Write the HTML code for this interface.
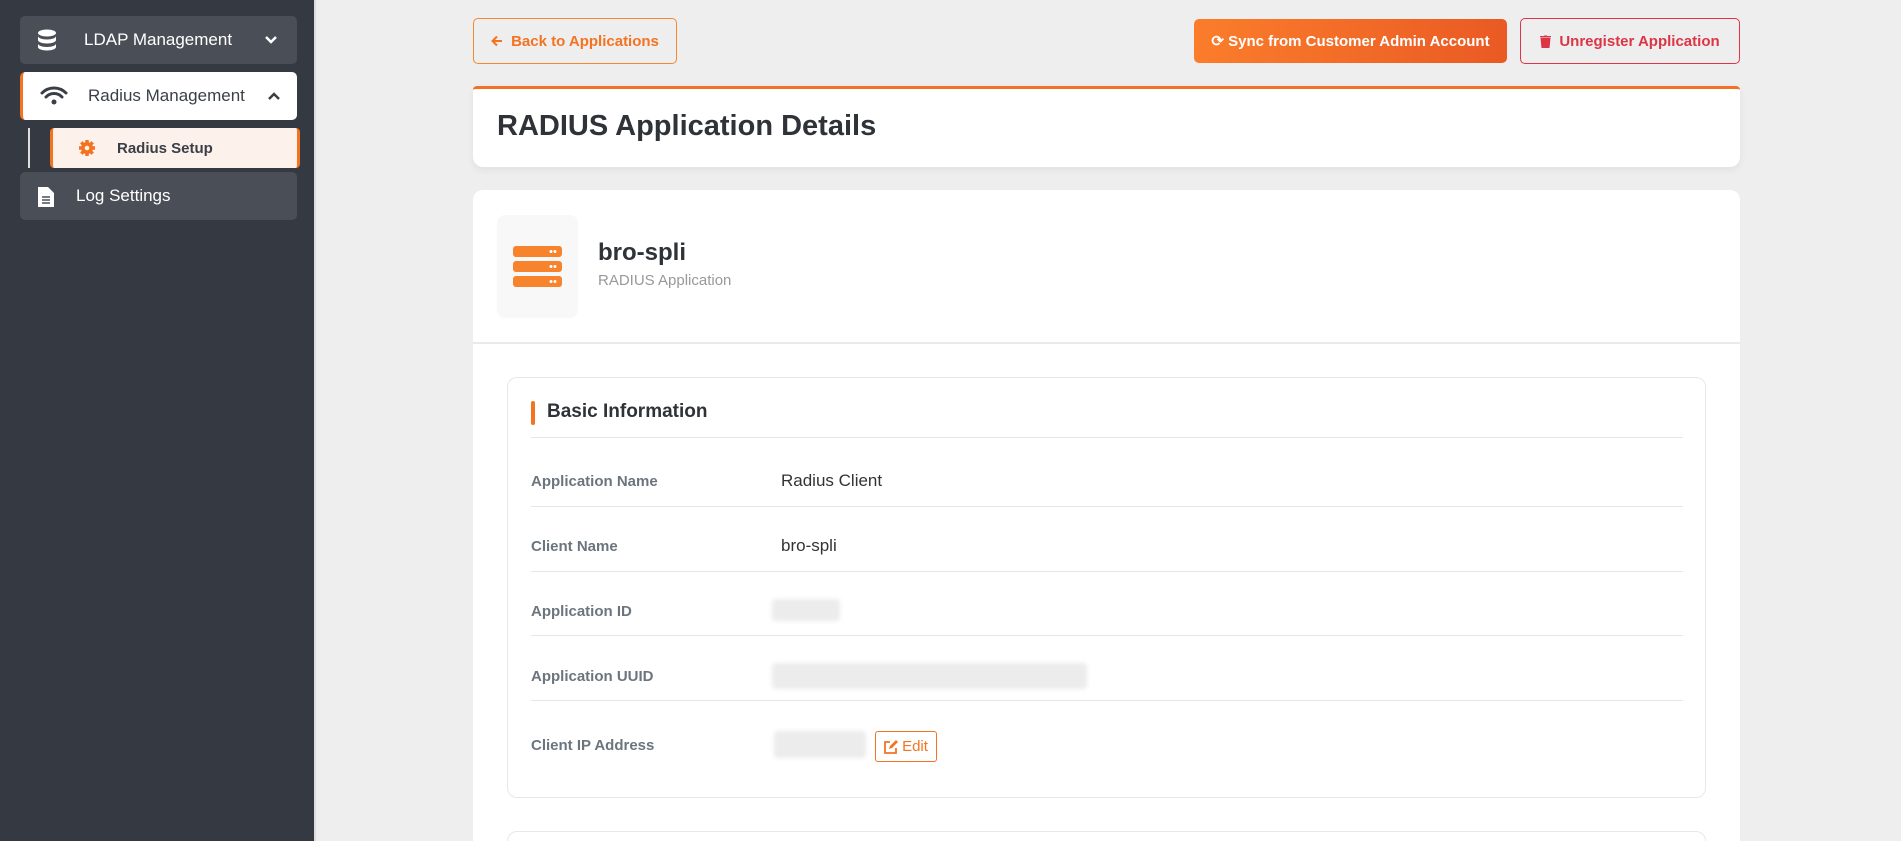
<!DOCTYPE html>
<html style="height:841px;overflow:hidden"><head><meta charset="utf-8"><style>
*{box-sizing:border-box;margin:0;padding:0}
body{width:1901px;height:841px;overflow:hidden;background:#eeeeee;font-family:"Liberation Sans",sans-serif;position:relative}
.sb{position:absolute;left:0;top:0;width:316px;height:841px;background:#353a42;border-right:2px solid #dcdcdc}
.it{position:absolute;left:20px;width:277px;height:48px;border-radius:5px;background:#4a4f57;color:#fff;font-size:17px;display:flex;align-items:center}
.abs{position:absolute}
.btn{position:absolute;top:18px;height:46px;border-radius:5px;font-size:15px;font-weight:bold;display:flex;align-items:center;justify-content:center;gap:8px}
.card{position:absolute;left:473px;width:1267px;background:#fff;border-radius:10px}
.lbl{position:absolute;left:531px;font-size:15px;font-weight:bold;color:#6c757d}
.val{position:absolute;left:781px;font-size:17px;color:#333}
.hr{position:absolute;left:531px;width:1152px;height:1px;background:#e6e6e6}
.blur{position:absolute;background:#ececec;filter:blur(2px);border-radius:3px}
</style></head><body>
<div class="sb">
 <div class="it" style="top:16px"><svg class="abs" style="left:17px" width="20" height="22" viewBox="0 0 20 22"><ellipse cx="10" cy="4" rx="9" ry="3.5" fill="#fff"/><path d="M1 7c0 2 4 3.5 9 3.5s9-1.5 9-3.5v4c0 2-4 3.5-9 3.5S1 13 1 11z" fill="#fff"/><path d="M1 14.5c0 2 4 3.5 9 3.5s9-1.5 9-3.5v3.5c0 2-4 3.5-9 3.5S1 20 1 18z" fill="#fff"/></svg><span style="position:absolute;left:64px">LDAP Management</span><svg class="abs" style="left:244px" width="14" height="10" viewBox="0 0 14 10"><path d="M2 2l5 5 5-5" stroke="#fff" stroke-width="2.5" fill="none"/></svg></div>
 <div class="it" style="top:72px;background:#fff;color:#3a3f47;border-left:3px solid #f47321"><svg class="abs" style="left:17px" width="28" height="20" viewBox="0 0 28 20"><path d="M2 7a17 17 0 0 1 24 0M6 11a11 11 0 0 1 16 0" stroke="#3a3f47" stroke-width="3" fill="none" stroke-linecap="round"/><circle cx="14" cy="16" r="2.5" fill="#3a3f47"/></svg><span style="position:absolute;left:65px">Radius Management</span><svg class="abs" style="left:244px" width="14" height="10" viewBox="0 0 14 10"><path d="M2 8l5-5 5 5" stroke="#3a3f47" stroke-width="2.5" fill="none"/></svg></div>
 <div class="abs" style="left:28px;top:128px;width:2px;height:40px;background:#ddd"></div>
 <div class="abs" style="left:50px;top:128px;width:250px;height:40px;background:#fdf1ec;border-left:3px solid #f47321;border-right:3px solid #f47321;border-radius:4px;font-size:15px;font-weight:bold;color:#3a3f47"><svg class="abs" style="left:25px;top:11px" width="18" height="18" viewBox="0 0 18 18"><circle cx="9" cy="9" r="6" fill="#f47321"/><g stroke="#f47321" stroke-width="3.5"><path d="M9 1v16M1 9h16M3.3 3.3l11.4 11.4M14.7 3.3L3.3 14.7"/></g><circle cx="9" cy="9" r="2.3" fill="#fdf1ec"/></svg><span style="position:absolute;left:64px;top:12px">Radius Setup</span></div>
 <div class="it" style="top:172px"><svg class="abs" style="left:18px" width="16" height="21" viewBox="0 0 16 21"><path d="M0 1h10l6 6v14H0z" fill="#fff"/><path d="M4 11h8M4 14h8M4 17h8" stroke="#4a4f57" stroke-width="1.5"/></svg><span style="position:absolute;left:56px">Log Settings</span></div>
</div>

<div class="btn" style="left:473px;width:204px;border:1px solid #f7882f;color:#f47321;background:transparent"><svg width="12" height="12" viewBox="0 0 12 12"><path d="M11 6H2M6 1.5L1.5 6 6 10.5" stroke="#f47321" stroke-width="2" fill="none"/></svg>Back to Applications</div>
<div class="btn" style="left:1194px;width:313px;background:linear-gradient(90deg,#fb7d2b,#ea5a24);color:#fff;top:19px;height:44px">⟳ Sync from Customer Admin Account</div>
<div class="btn" style="left:1520px;width:220px;border:1px solid #e0334a;color:#dc3545;background:transparent"><svg width="11" height="13" viewBox="0 0 11 13"><path d="M0 1.5h11M4 0h3M1 3h9l-1 10H2z" fill="#dc3545" stroke="#dc3545"/></svg>Unregister Application</div>

<div class="card" style="top:86px;height:81px;border-top:3px solid #f27027;border-radius:4px 4px 10px 10px;box-shadow:0 3px 8px rgba(0,0,0,.06)"><div class="abs" style="left:24px;top:21px;font-size:29px;font-weight:bold;color:#2f3338">RADIUS Application Details</div></div>

<div class="card" style="top:190px;height:651px;border-radius:10px 10px 0 0">
 <div class="abs" style="left:24px;top:25px;width:81px;height:103px;background:#f8f8f8;border-radius:8px"><svg class="abs" style="left:16px;top:31px" width="49" height="42" viewBox="0 0 49 42"><g fill="#f7832d"><rect y="0" width="49" height="11" rx="3"/><rect y="15" width="49" height="11" rx="3"/><rect y="30" width="49" height="11" rx="3"/></g><g fill="#fff"><circle cx="38" cy="5.5" r="1.5"/><circle cx="42" cy="5.5" r="1.5"/><circle cx="38" cy="20.5" r="1.5"/><circle cx="42" cy="20.5" r="1.5"/><circle cx="38" cy="35.5" r="1.5"/><circle cx="42" cy="35.5" r="1.5"/></g></svg></div>
 <div class="abs" style="left:125px;top:49px;font-size:24px;font-weight:bold;color:#2f3338">bro-spli</div>
 <div class="abs" style="left:125px;top:82px;font-size:15px;color:#999">RADIUS Application</div>
 <div class="abs" style="left:0;top:152px;width:1267px;height:2px;background:#e8ebee"></div>
</div>
<div class="abs" style="left:507px;top:377px;width:1199px;height:421px;border:1px solid #e8e8e8;border-radius:10px;background:#fff"></div>
<div class="abs" style="left:531px;top:401px;width:4px;height:24px;background:#f47321;border-radius:2px"></div>
<div class="abs" style="left:547px;top:401px;font-size:19px;font-weight:bold;color:#2f3338">Basic Information</div>
<div class="hr" style="top:437px"></div>
<div class="lbl" style="top:473px">Application Name</div><div class="val" style="top:471px">Radius Client</div>
<div class="hr" style="top:506px"></div>
<div class="lbl" style="top:538px">Client Name</div><div class="val" style="top:536px">bro-spli</div>
<div class="hr" style="top:571px"></div>
<div class="lbl" style="top:603px">Application ID</div><div class="blur" style="left:772px;top:599px;width:68px;height:22px"></div>
<div class="hr" style="top:635px"></div>
<div class="lbl" style="top:668px">Application UUID</div><div class="blur" style="left:772px;top:663px;width:315px;height:26px"></div>
<div class="hr" style="top:700px"></div>
<div class="lbl" style="top:737px">Client IP Address</div><div class="blur" style="left:774px;top:731px;width:92px;height:27px"></div>
<div class="abs" style="left:875px;top:731px;width:62px;height:31px;border:1px solid #f47321;border-radius:3px;color:#f47321;font-size:15px;display:flex;align-items:center;justify-content:center;gap:4px"><svg width="14" height="14" viewBox="0 0 14 14"><path d="M6 2H1v11h11V8" stroke="#f47321" stroke-width="1.8" fill="none"/><path d="M5 9l1-3 6-6 2 2-6 6z" fill="#f47321"/></svg>Edit</div>
<div class="abs" style="left:507px;top:831px;width:1199px;height:30px;border:1px solid #e8e8e8;border-radius:10px;background:#fff"></div>
</body></html>
